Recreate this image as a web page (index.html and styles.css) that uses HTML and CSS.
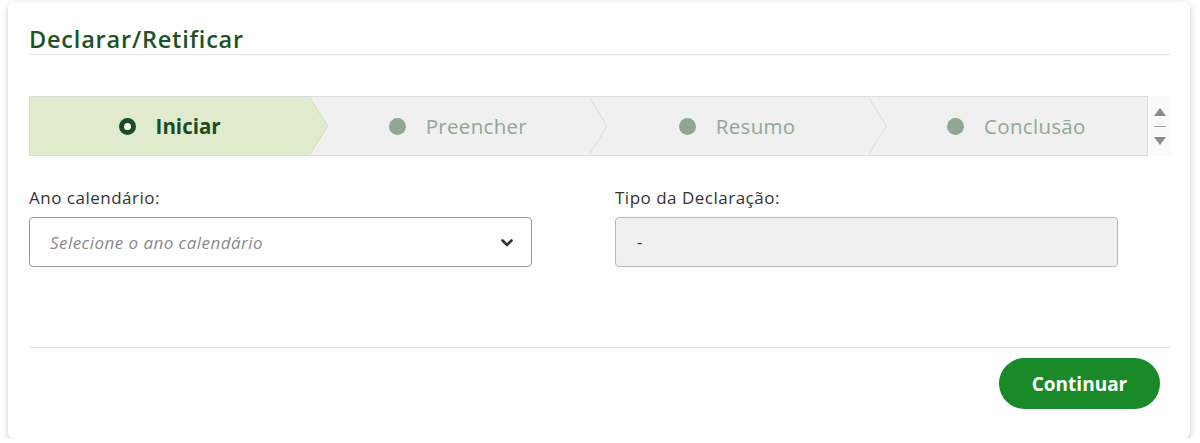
FILE: index.html
```html
<!DOCTYPE html>
<html lang="pt-BR">
<head>
<meta charset="utf-8">
<title>Declarar/Retificar</title>
<link rel="stylesheet" href="styles.css">
</head>
<body>
<div class="card">
  <h1 class="title">Declarar/Retificar</h1>

  <div class="stepper">
    <div class="track">
      <div class="step active"><span class="dot"></span><span class="label">Iniciar</span></div>
      <div class="step"><span class="dot"></span><span class="label">Preencher</span></div>
      <div class="step"><span class="dot"></span><span class="label">Resumo</span></div>
      <div class="step last"><span class="dot"></span><span class="label">Conclusão</span></div>
    </div>
    <div class="scroller">
      <span class="tri up"></span>
      <span class="bar"></span>
      <span class="tri down"></span>
    </div>
  </div>

  <div class="fields">
    <div class="field">
      <label class="field-label">Ano calendário:</label>
      <div class="select">
        <span class="placeholder">Selecione o ano calendário</span>
        <svg class="caret" width="12" height="8" viewBox="0 0 12 8"><polyline points="1.5,1.5 6,6 10.5,1.5" fill="none" stroke="#333" stroke-width="2.6" stroke-linecap="round" stroke-linejoin="round"/></svg>
      </div>
    </div>
    <div class="field">
      <label class="field-label">Tipo da Declaração:</label>
      <div class="readonly">-</div>
    </div>
  </div>

  <div class="footer">
    <button class="btn">Continuar</button>
  </div>
</div>
</body>
</html>
```
FILE: styles.css
```css
html, body {
  margin: 0;
  padding: 0;
  background: #ffffff;
}
body {
  padding: 2px 10px 0 8px;
  font-family: "Open Sans", "Lato", sans-serif;
  color: #333;
}
.card {
  width: 1182px;
  box-sizing: border-box;
  background: #fff;
  border-radius: 6px;
  box-shadow: 0 2px 6px rgba(0, 0, 0, 0.22);
  padding: 22px 20px 29px 21px;
}
.title {
  margin: 0;
  font-family: "Open Sans", sans-serif;
  font-weight: 600;
  font-size: 23.5px;
  line-height: 30px;
  color: #1d5128;
  border-bottom: 1px solid #e2e2e2;
  letter-spacing: 0.8px;
}
.stepper {
  display: flex;
  margin-top: 41px;
  height: 60px;
}
.track {
  display: flex;
  width: 1120px;
  box-sizing: border-box;
  border: 1px solid #dcdcdc;
  background: #f0f0f0;
}
.step {
  position: relative;
  flex: none;
  width: 25%;
  box-sizing: border-box;
  display: flex;
  align-items: center;
  justify-content: center;
  gap: 20px;
  padding-left: 18px;
  font-family: "Open Sans", sans-serif;
  font-size: 20.5px;
  letter-spacing: 0.3px;
  color: #8fa893;
}
.step.active {
  padding-left: 0;
  background: #e0eacd;
  color: #1b4d25;
  font-weight: 700;
  letter-spacing: 0;
}
.step::before,
.step::after {
  content: "";
  position: absolute;
  top: 0;
  bottom: 0;
  width: 18px;
  clip-path: polygon(0 0, 100% 50%, 0 100%);
  z-index: 1;
}
.step::before {
  right: -19px;
  background: #dadada;
}
.step::after {
  right: -18px;
  background: #f0f0f0;
}
.step.active::before {
  background: #d2dcc0;
}
.step.active::after {
  background: #e0eacd;
}
.step.last::before,
.step.last::after {
  display: none;
}
.dot {
  width: 17px;
  height: 17px;
  border-radius: 50%;
  background: #8fa893;
  flex: none;
}
.step.active .dot {
  box-sizing: border-box;
  border: 5px solid #1b4d25;
  background: #fff;
}
.label {
  line-height: 1;
}
.scroller {
  width: 21px;
  margin-left: 1px;
  background: #fafafa;
  display: flex;
  flex-direction: column;
  align-items: center;
  justify-content: center;
  gap: 10px;
}
.tri {
  width: 0;
  height: 0;
  border-left: 6px solid transparent;
  border-right: 6px solid transparent;
}
.tri.up {
  border-bottom: 8px solid #8a8a8a;
}
.tri.down {
  border-top: 8px solid #8a8a8a;
}
.bar {
  width: 12px;
  height: 1px;
  background: #a0a0a0;
}
.fields {
  display: grid;
  grid-template-columns: 503px 503px;
  column-gap: 83px;
  margin-top: 32px;
}
.field {
  display: flex;
  flex-direction: column;
}
.field-label {
  font-size: 17px;
  line-height: 20px;
  letter-spacing: 0.5px;
  color: #333;
  margin-bottom: 9px;
}
.select,
.readonly {
  height: 50px;
  box-sizing: border-box;
  border: 1px solid #9a9a9a;
  border-radius: 4px;
  display: flex;
  align-items: center;
  padding: 0 18px 0 20px;
}
.select {
  justify-content: space-between;
}
.placeholder {
  font-style: italic;
  font-size: 17px;
  letter-spacing: 0.45px;
  color: #8a8a8a;
}
.caret {
  margin-top: 1px;
}
.readonly {
  background: #f0f0f0;
  border-color: #b8b8b8;
  font-size: 16px;
  color: #333;
  padding-left: 21px;
}
.footer {
  margin-top: 80px;
  border-top: 1px solid #dcdcdc;
  padding-top: 10px;
  padding-right: 10px;
  display: flex;
  justify-content: flex-end;
}
.btn {
  width: 161px;
  height: 51px;
  border: none;
  border-radius: 26px;
  background: #198a27;
  color: #fff;
  font-family: "Open Sans", sans-serif;
  font-weight: 700;
  font-size: 19px;
  cursor: pointer;
}
```
